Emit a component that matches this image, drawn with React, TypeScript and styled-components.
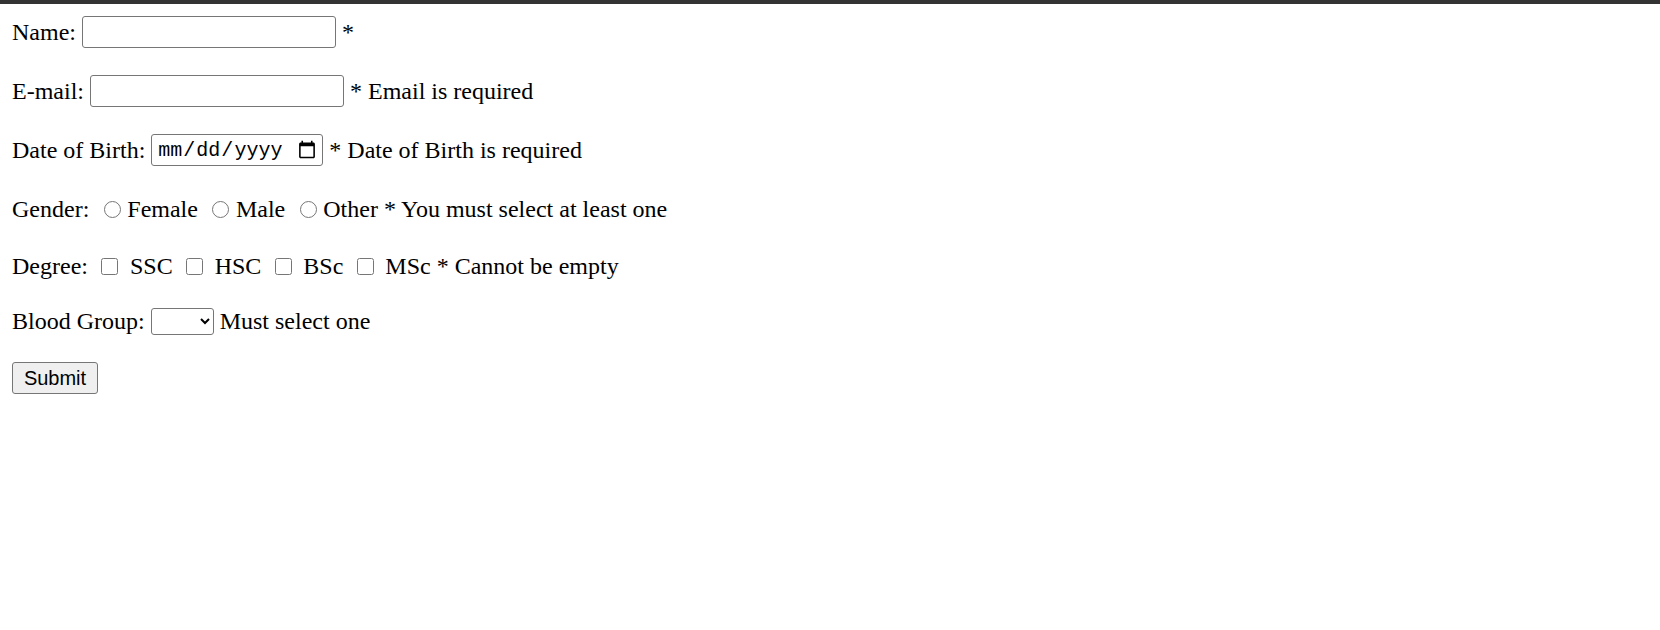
import React from "react";
import styled, { createGlobalStyle } from "styled-components";

const GlobalStyle = createGlobalStyle`
  html, body {
    margin: 0;
    padding: 0;
    background: #ffffff;
  }
  body {
    font-family: "Liberation Serif", "Times New Roman", serif;
    font-size: 24px;
    color: #000;
  }
`;

const TopBar = styled.div`
  height: 4px;
  background-color: #333333;
`;

const Form = styled.form`
  display: flex;
  flex-direction: column;
  gap: 27px;
  padding: 12px 12px;
`;

interface RowProps {
  $h?: number;
}

const Row = styled.div<RowProps>`
  display: flex;
  align-items: center;
  height: ${(p) => p.$h || 32}px;
  white-space: pre;
  line-height: 1;
`;

const Text = styled.span`
  white-space: pre;
`;

const TextInput = styled.input`
  box-sizing: border-box;
  width: 254px;
  height: 32px;
  margin: 0;
  padding: 1px 3px;
  border: 1px solid #767676;
  border-radius: 3px;
  background: #fff;
  font-family: "Liberation Sans", Arial, sans-serif;
  font-size: 20px;
  outline: none;
`;

const DateInput = styled.input`
  box-sizing: border-box;
  width: 172px;
  height: 32px;
  margin: 0;
  padding: 1px 3px 1px 5px;
  border: 1px solid #767676;
  border-radius: 3px;
  background: #fff;
  color: #000;
  font-family: "Liberation Mono", "DejaVu Sans Mono", monospace;
  font-size: 20px;
`;

const Radio = styled.input`
  width: 17px;
  height: 17px;
  margin: 0 6.5px 0 8.5px;
  accent-color: #767676;
`;

const Check = styled.input`
  width: 17px;
  height: 17px;
  margin: 0 5.5px 0 7.5px;
`;

const Select = styled.select`
  box-sizing: border-box;
  width: 63px;
  height: 27px;
  margin: 0;
  padding: 0 4px;
  border: 1px solid #767676;
  border-radius: 3px;
  background: #fff;
  font-family: "Liberation Sans", Arial, sans-serif;
  font-size: 20px;
`;

const SubmitButton = styled.button`
  box-sizing: border-box;
  width: 86px;
  height: 32px;
  margin: 0;
  padding: 1px 9px;
  border: 1px solid #767676;
  border-radius: 3px;
  background-color: #efefef;
  color: #000;
  font-family: "Liberation Sans", Arial, sans-serif;
  font-size: 20px;
`;

export default function App() {
  return (
    <>
      <GlobalStyle />
      <TopBar />
      <Form onSubmit={(e) => e.preventDefault()}>
        <Row>
          <Text>{"Name: "}</Text>
          <TextInput type="text" />
          <Text>{" *"}</Text>
        </Row>
        <Row>
          <Text>{"E-mail: "}</Text>
          <TextInput type="text" />
          <Text>{" * Email is required"}</Text>
        </Row>
        <Row>
          <Text>{"Date of Birth: "}</Text>
          <DateInput type="date" />
          <Text>{" * Date of Birth is required"}</Text>
        </Row>
        <Row>
          <Text>{"Gender: "}</Text>
          <Radio type="radio" name="gender" />
          <Text>{"Female "}</Text>
          <Radio type="radio" name="gender" />
          <Text>{"Male "}</Text>
          <Radio type="radio" name="gender" />
          <Text>{"Other * You must select at least one"}</Text>
        </Row>
        <Row $h={28}>
          <Text>{"Degree: "}</Text>
          <Check type="checkbox" />
          <Text>{" SSC "}</Text>
          <Check type="checkbox" />
          <Text>{" HSC "}</Text>
          <Check type="checkbox" />
          <Text>{" BSc "}</Text>
          <Check type="checkbox" />
          <Text>{" MSc * Cannot be empty"}</Text>
        </Row>
        <Row $h={28}>
          <Text>{"Blood Group: "}</Text>
          <Select defaultValue="">
            <option value=""></option>
            <option value="A+">A+</option>
            <option value="B+">B+</option>
            <option value="O+">O+</option>
            <option value="AB+">AB+</option>
          </Select>
          <Text>{" Must select one"}</Text>
        </Row>
        <Row>
          <SubmitButton type="submit">Submit</SubmitButton>
        </Row>
      </Form>
    </>
  );
}
